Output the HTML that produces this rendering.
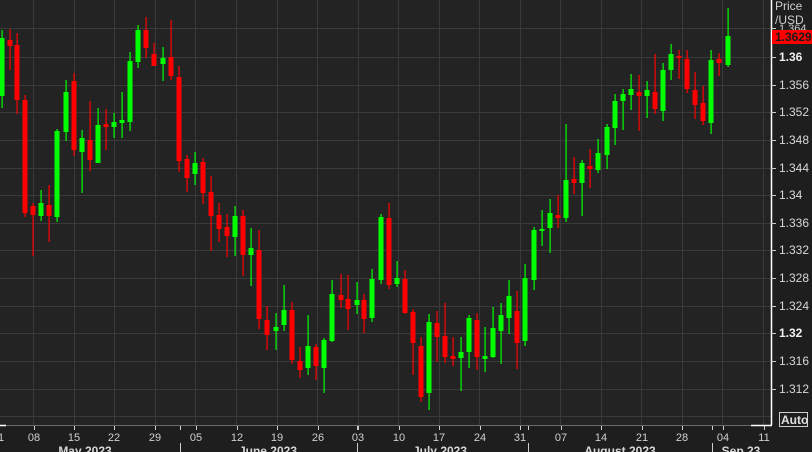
<!DOCTYPE html>
<html><head><meta charset="utf-8"><style>
html,body{margin:0;padding:0;background:#1e1e1f;width:812px;height:452px;overflow:hidden}
svg{display:block}
text{font-family:"Liberation Sans",sans-serif}
</style></head><body>
<svg id="s" width="812" height="452" xmlns="http://www.w3.org/2000/svg">
<rect x="0" y="0" width="812" height="452" fill="#1e1e1f"/>
<rect x="0" y="0" width="771" height="425" fill="#232324"/>
<g id="grid" stroke="#3a3a3a" stroke-width="1"></g>
<g id="c"></g>
<line x1="771.5" y1="0" x2="771.5" y2="425" stroke="#ffffff" stroke-width="1.5"/>
<line x1="0" y1="425.5" x2="771" y2="425.5" stroke="#6a6a6a" stroke-width="1"/>
<line x1="0" y1="425.5" x2="6" y2="425.5" stroke="#fff" stroke-width="1.5"/>
<line x1="751" y1="425.5" x2="772" y2="425.5" stroke="#fff" stroke-width="1.5"/>
<g id="ticks" stroke="#cfcfcf" stroke-width="1"></g>
<g fill="#d8d8d8" font-size="12">
<text x="775" y="10" fill="#cfcfcf">Price</text>
<text x="775" y="24" fill="#cfcfcf">/USD</text>
<text x="779" y="32" font-size="11" fill="#cfcfcf">1.364</text>
<text x="779" y="61" font-weight="bold" fill="#f0f0f0">1.36</text>
<text x="779" y="89">1.356</text>
<text x="779" y="116">1.352</text>
<text x="779" y="144">1.348</text>
<text x="779" y="172">1.344</text>
<text x="779" y="199">1.34</text>
<text x="779" y="227">1.336</text>
<text x="779" y="254">1.332</text>
<text x="779" y="282">1.328</text>
<text x="779" y="310">1.324</text>
<text x="779" y="337" font-weight="bold" fill="#f0f0f0">1.32</text>
<text x="779" y="365">1.316</text>
<text x="779" y="393">1.312</text>
</g>
<rect x="772" y="30" width="40" height="14" fill="#ff0000"/>
<text x="775" y="41" font-size="12" font-weight="bold" fill="#1a1a1a">1.3629</text>
<rect x="779.5" y="412.5" width="28" height="14" fill="none" stroke="#cfcfcf"/>
<text x="781" y="424" font-size="12" font-weight="bold" fill="#e0e0e0">Auto</text>
<g fill="#d0d0d0" font-size="11" text-anchor="middle">
<text x="1" y="441">1</text><text x="34" y="441">08</text><text x="74" y="441">15</text><text x="114" y="441">22</text><text x="155" y="441">29</text><text x="196" y="441">05</text><text x="237" y="441">12</text><text x="277" y="441">19</text><text x="318" y="441">26</text><text x="358" y="441">03</text><text x="399" y="441">10</text><text x="439" y="441">17</text><text x="480" y="441">24</text><text x="520" y="441">31</text><text x="561" y="441">07</text><text x="601" y="441">14</text><text x="642" y="441">21</text><text x="682" y="441">28</text><text x="723" y="441">04</text><text x="764" y="441">11</text>
</g>
<g fill="#d8d8d8" font-size="12" font-weight="bold" text-anchor="middle">
<text x="85" y="455">May 2023</text><text x="268" y="455">June 2023</text><text x="440" y="455">July 2023</text><text x="620" y="455">August 2023</text><text x="741" y="455">Sep 23</text>
</g>
<g stroke="#cfcfcf"><line x1="180.5" y1="443" x2="180.5" y2="452"/><line x1="357.5" y1="443" x2="357.5" y2="452"/><line x1="528.5" y1="443" x2="528.5" y2="452"/><line x1="712.5" y1="443" x2="712.5" y2="452"/></g>
</svg>
<script>
var NS="http://www.w3.org/2000/svg";
function el(p,t,a){var e=document.createElementNS(NS,t);for(var k in a)e.setAttribute(k,a[k]);p.appendChild(e);}
var g=document.getElementById("grid");
[28,57,85,112,140,168,195,223,250,278,306,333,361,389,416].forEach(function(y){el(g,"line",{x1:0,y1:y+.5,x2:771,y2:y+.5});});
var vx=[33,74,114,155,195,236,277,317,358,398,439,479,520,560,601,641,682,722,763];
vx.forEach(function(x){el(g,"line",{x1:x+.5,y1:0,x2:x+.5,y2:425});});
var tk=document.getElementById("ticks");
[28,57,85,112,140,168,195,223,250,278,306,333,361,389].forEach(function(y){el(tk,"line",{x1:771,y1:y+.5,x2:776,y2:y+.5});});
[34,74,114,155,196,237,277,318,358,399,439,480,520,561,601,642,682,723,764,180,357,528,712].forEach(function(x){el(tk,"line",{x1:x+.5,y1:426,x2:x+.5,y2:430});});
var d=[
[1.5,38,96,30,108,1],[9.5,40,46,29,70,0],[17,45,100,33,114,0],[25,100,213,95,217,0],[33,206,215,203,256,0],[41,203,216,190,221,1],[49,205,216,185,242,0],[57,131,217,129,222,1],[66,92,132,80,141,1],[74,81,150,73,156,0],[82,138,152,130,193,1],[90,140,160,101,171,0],[98,125,163,108,163,1],[106,124,127,109,150,0],[114,122,127,113,138,1],[122,120,123,92,138,1],[130,61,122,52,131,1],[138,30,62,25,68,1],[146,30,48,17,58,0],[154,54,66,43,66,0],[163,58,64,47,81,1],[171,57,76,20,80,0],[179,77,161,66,172,0],[187,159,178,155,192,0],[195,163,174,152,185,1],[203,162,193,158,204,0],[211,192,216,176,251,0],[219,215,229,203,242,0],[227,227,236,214,257,0],[235,216,237,206,256,1],[243,216,255,210,276,0],[251,248,255,228,286,1],[259,250,319,230,329,0],[267,320,335,306,350,0],[276,327,331,313,350,1],[284,310,325,285,331,1],[292,310,360,302,364,0],[300,361,370,347,378,0],[308,346,368,315,375,1],[316,347,366,344,380,0],[324,340,368,338,393,1],[332,294,341,280,342,1],[341,295,300,274,308,0],[348,299,309,275,330,0],[357,300,305,282,314,1],[364,300,319,294,333,0],[372,279,318,269,322,1],[381,217,280,214,284,1],[389,218,285,203,289,0],[397,278,284,261,287,1],[405,279,313,270,314,0],[413,312,343,309,375,0],[421,346,397,337,402,0],[429,322,393,314,410,1],[437,323,337,311,362,0],[445,336,357,303,363,0],[453,356,359,337,366,0],[461,352,358,337,391,1],[469,318,352,315,368,1],[477,320,357,313,370,0],[485,356,359,327,372,1],[493,328,357,307,358,1],[501,315,331,303,364,1],[509,296,318,280,334,1],[517,311,343,291,369,0],[525,278,341,264,346,1],[534,230,280,227,290,1],[542,229,231,210,246,1],[550,213,228,199,253,1],[558,215,218,195,228,0],[566,180,218,124,222,1],[574,179,183,157,194,0],[582,163,183,160,216,1],[590,166,169,149,188,0],[598,153,170,139,173,1],[607,127,155,124,169,1],[615,101,128,94,145,1],[623,94,101,89,130,1],[631,89,95,74,110,1],[639,92,96,75,131,0],[647,90,96,81,118,1],[655,92,109,54,114,0],[663,70,111,63,121,1],[671,54,70,44,80,1],[679,56,58,50,79,0],[687,59,89,50,93,0],[695,90,105,72,119,0],[703,103,121,86,125,0],[711,60,123,50,134,1],[719,59,63,53,76,0],[728,36,65,8,67,1]];
var c=document.getElementById("c");
d.forEach(function(a){var col=a[5]?"#00ff00":"#ff0000";var x=Math.round(a[0]);
el(c,"rect",{x:x-0.5,y:a[3],width:1.2,height:a[4]-a[3],fill:col});
el(c,"rect",{x:x-2.5,y:a[1],width:5,height:Math.max(2,a[2]-a[1]),fill:col});});
</script>
</body></html>
